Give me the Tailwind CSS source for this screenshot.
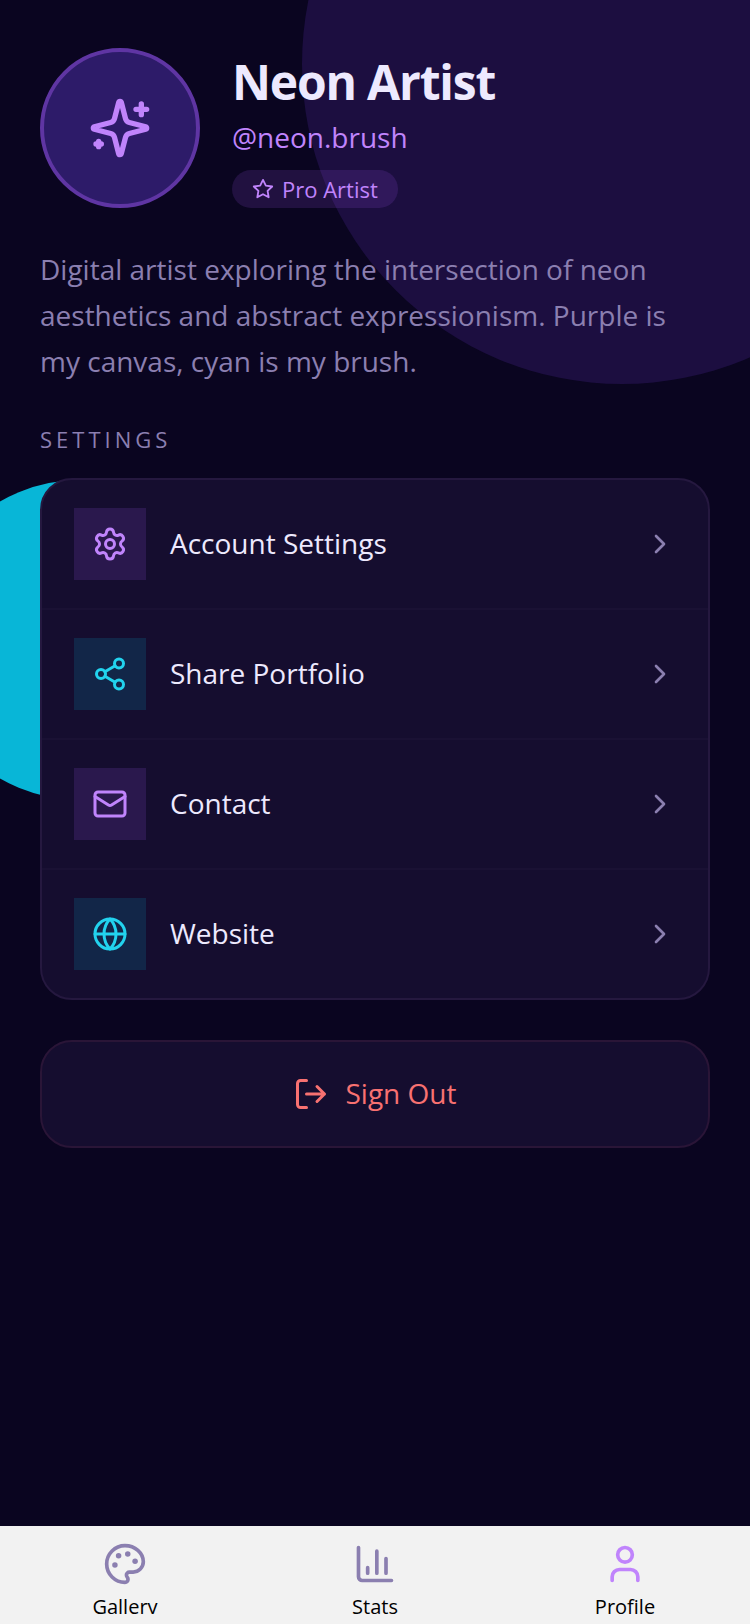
<!DOCTYPE html>
<html lang="en">
<head>
  <meta charset="UTF-8" />
  <meta name="viewport" content="width=device-width, initial-scale=1.0" />
  <title>Neon Artist - Profile</title>
  <script src="https://cdn.jsdelivr.net/npm/@tailwindcss/browser@4"></script>
</head>
<body class="bg-[#0a0520] font-['Open_Sans',sans-serif]">
  <div class="relative flex flex-col min-h-screen overflow-hidden">
    <!-- background glows -->
    <div class="absolute -top-64 -right-48 size-160 rounded-full bg-[#1c0e40]"></div>
    <div class="absolute top-120 -left-20 size-80 rounded-full bg-[#08b6d7]"></div>

    <main class="relative flex-1 px-10 pt-12">
      <header class="flex gap-8">
        <div class="size-40 shrink-0 rounded-full border-4 border-[#5f35a3] bg-[#2d1b69] flex items-center justify-center text-[#c084fc]">
          <svg class="size-16" viewBox="0 0 24 24" fill="none" stroke="currentColor" stroke-width="2" stroke-linecap="round" stroke-linejoin="round">
            <path d="M9.937 15.5A2 2 0 0 0 8.5 14.063l-6.135-1.582a.5.5 0 0 1 0-.962L8.5 9.936A2 2 0 0 0 9.937 8.5l1.582-6.135a.5.5 0 0 1 .963 0L14.063 8.5A2 2 0 0 0 15.5 9.937l6.135 1.581a.5.5 0 0 1 0 .964L15.5 14.063a2 2 0 0 0-1.437 1.437l-1.582 6.135a.5.5 0 0 1-.963 0z" />
            <path d="M20 3v4M22 5h-4M4 17v2M5 18H3" />
          </svg>
        </div>
        <div class="flex flex-col items-start justify-between">
          <div>
            <h1 class="text-5xl leading-[68px] font-bold tracking-tight text-[#ede9fe]">Neon Artist</h1>
            <p class="mt-0.5 text-[28px] leading-[38px] text-[#c084fc]">@neon.brush</p>
          </div>
          <div class="flex items-center gap-2 rounded-full bg-[#a855f7]/15 px-5 py-1 text-[22px] leading-[30px] text-[#c084fc]">
            <svg class="size-[22px]" viewBox="0 0 24 24" fill="none" stroke="currentColor" stroke-width="2" stroke-linecap="round" stroke-linejoin="round">
              <path d="M12 2l3.09 6.26 6.91 1.01-5 4.87 1.18 6.88L12 17.77l-6.18 3.25L7 14.14 2 9.27l6.91-1.01z" />
            </svg>
            Pro Artist
          </div>
        </div>
      </header>

      <p class="mt-[38px] text-[28px] leading-[46px] text-[#8b7fb0]">Digital artist exploring the intersection of neon aesthetics and abstract expressionism. Purple is my canvas, cyan is my brush.</p>

      <h2 class="mt-10 text-[22px] leading-[30px] tracking-[4px] text-[#8b7fb0]">SETTINGS</h2>

      <nav class="mt-6 rounded-4xl border-2 border-[#25183f] bg-[#150d2f] text-[28px] leading-[38px] text-[#ede9fe]">
        <a href="#account" class="flex items-center gap-6 px-8 py-7 border-b-2 border-[#1a1134]">
          <span class="size-18 flex items-center justify-center bg-[#a855f7]/15 text-[#c084fc]">
            <svg class="size-9" viewBox="0 0 24 24" fill="none" stroke="currentColor" stroke-width="2" stroke-linecap="round" stroke-linejoin="round">
              <path d="M9.671 4.136a2.34 2.34 0 0 1 4.659 0 2.34 2.34 0 0 0 3.319 1.915 2.34 2.34 0 0 1 2.33 4.033 2.34 2.34 0 0 0 0 3.831 2.34 2.34 0 0 1-2.33 4.033 2.34 2.34 0 0 0-3.319 1.915 2.34 2.34 0 0 1-4.659 0 2.34 2.34 0 0 0-3.32-1.915 2.34 2.34 0 0 1-2.33-4.033 2.34 2.34 0 0 0 0-3.831A2.34 2.34 0 0 1 6.35 6.051a2.34 2.34 0 0 0 3.319-1.915" />
              <circle cx="12" cy="12" r="3" />
            </svg>
          </span>
          <span class="flex-1 pb-0.5">Account Settings</span>
          <svg class="size-8 text-[#8b7fb0]" viewBox="0 0 24 24" fill="none" stroke="currentColor" stroke-width="2" stroke-linecap="round" stroke-linejoin="round"><path d="m9 18 6-6-6-6" /></svg>
        </a>
        <a href="#share" class="flex items-center gap-6 px-8 py-7 border-b-2 border-[#1a1134]">
          <span class="size-18 flex items-center justify-center bg-[#06b6d4]/15 text-[#22d3ee]">
            <svg class="size-9" viewBox="0 0 24 24" fill="none" stroke="currentColor" stroke-width="2" stroke-linecap="round" stroke-linejoin="round">
              <circle cx="18" cy="5" r="3" />
              <circle cx="6" cy="12" r="3" />
              <circle cx="18" cy="19" r="3" />
              <path d="m8.59 13.51 6.83 3.98M15.41 6.51l-6.82 3.98" />
            </svg>
          </span>
          <span class="flex-1 pb-0.5">Share Portfolio</span>
          <svg class="size-8 text-[#8b7fb0]" viewBox="0 0 24 24" fill="none" stroke="currentColor" stroke-width="2" stroke-linecap="round" stroke-linejoin="round"><path d="m9 18 6-6-6-6" /></svg>
        </a>
        <a href="#contact" class="flex items-center gap-6 px-8 py-7 border-b-2 border-[#1a1134]">
          <span class="size-18 flex items-center justify-center bg-[#a855f7]/15 text-[#c084fc]">
            <svg class="size-9" viewBox="0 0 24 24" fill="none" stroke="currentColor" stroke-width="2" stroke-linecap="round" stroke-linejoin="round">
              <rect x="2" y="4" width="20" height="16" rx="2" />
              <path d="m22 7-8.97 5.7a1.94 1.94 0 0 1-2.06 0L2 7" />
            </svg>
          </span>
          <span class="flex-1 pb-0.5">Contact</span>
          <svg class="size-8 text-[#8b7fb0]" viewBox="0 0 24 24" fill="none" stroke="currentColor" stroke-width="2" stroke-linecap="round" stroke-linejoin="round"><path d="m9 18 6-6-6-6" /></svg>
        </a>
        <a href="#website" class="flex items-center gap-6 px-8 py-7">
          <span class="size-18 flex items-center justify-center bg-[#06b6d4]/15 text-[#22d3ee]">
            <svg class="size-9" viewBox="0 0 24 24" fill="none" stroke="currentColor" stroke-width="2" stroke-linecap="round" stroke-linejoin="round">
              <circle cx="12" cy="12" r="10" />
              <path d="M12 2a14.5 14.5 0 0 0 0 20 14.5 14.5 0 0 0 0-20M2 12h20" />
            </svg>
          </span>
          <span class="flex-1 pb-0.5">Website</span>
          <svg class="size-8 text-[#8b7fb0]" viewBox="0 0 24 24" fill="none" stroke="currentColor" stroke-width="2" stroke-linecap="round" stroke-linejoin="round"><path d="m9 18 6-6-6-6" /></svg>
        </a>
      </nav>

      <button type="button" class="mt-10 w-full flex items-center justify-center gap-4 rounded-4xl border-2 border-[#2a1537] bg-[#150d2f] py-8 text-[28px] leading-[38px] text-[#f87171]">
        <svg class="size-9" viewBox="0 0 24 24" fill="none" stroke="currentColor" stroke-width="2" stroke-linecap="round" stroke-linejoin="round">
          <path d="M9 21H5a2 2 0 0 1-2-2V5a2 2 0 0 1 2-2h4M16 17l5-5-5-5M21 12H9" />
        </svg>
        <span class="pb-0.5">Sign Out</span>
      </button>
    </main>

    <!-- tab bar -->
    <nav class="relative grid grid-cols-3 bg-[#f2f2f2] pt-4 pb-2.5 text-xl text-black">
      <a href="#gallery" class="flex flex-col items-center gap-2">
        <svg class="size-11 text-[#8b7fb0]" viewBox="0 0 24 24" fill="none" stroke="currentColor" stroke-width="2" stroke-linecap="round" stroke-linejoin="round">
          <g fill="currentColor" stroke="none">
            <circle cx="13.5" cy="6.5" r="1.5" />
            <circle cx="17.5" cy="10.5" r="1.5" />
            <circle cx="8.5" cy="7.5" r="1.5" />
            <circle cx="6.5" cy="12.5" r="1.5" />
          </g>
          <path d="M12 2C6.5 2 2 6.5 2 12s4.5 10 10 10c.926 0 1.648-.746 1.648-1.688 0-.437-.18-.835-.437-1.125-.29-.289-.438-.652-.438-1.125a1.64 1.64 0 0 1 1.668-1.668h1.996c3.051 0 5.555-2.503 5.555-5.554C21.965 6.012 17.461 2 12 2z" />
        </svg>
        <span class="h-5 overflow-hidden leading-[26px]">Gallery</span>
      </a>
      <a href="#stats" class="flex flex-col items-center gap-2">
        <svg class="size-11 text-[#8b7fb0]" viewBox="0 0 24 24" fill="none" stroke="currentColor" stroke-width="2" stroke-linecap="round" stroke-linejoin="round">
          <path d="M3 3v16a2 2 0 0 0 2 2h16M18 17V9M13 17V5M8 17v-3" />
        </svg>
        <span class="h-5 overflow-hidden leading-[26px]">Stats</span>
      </a>
      <a href="#profile" class="flex flex-col items-center gap-2" aria-current="page">
        <svg class="size-11 text-[#c084fc]" viewBox="0 0 24 24" fill="none" stroke="currentColor" stroke-width="2" stroke-linecap="round" stroke-linejoin="round">
          <path d="M19 21v-2a4 4 0 0 0-4-4H9a4 4 0 0 0-4 4v2" />
          <circle cx="12" cy="7" r="4" />
        </svg>
        <span class="h-5 overflow-hidden leading-[26px]">Profile</span>
      </a>
    </nav>
  </div>
</body>
</html>
